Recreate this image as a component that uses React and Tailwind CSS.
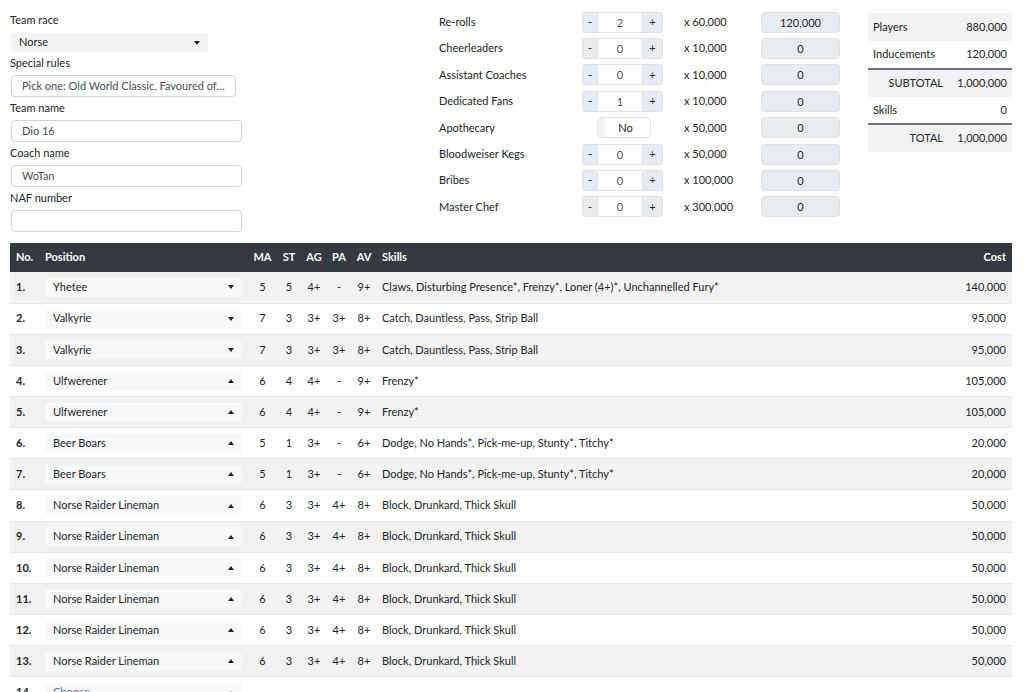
const font = { fontFamily: 'Lato, "Open Sans", "Liberation Sans", sans-serif' }

const steppers = [
  { label: 'Re-rolls', value: 2, price: 'x 60,000', total: '120,000' },
  { label: 'Cheerleaders', value: 0, price: 'x 10,000', total: '0' },
  { label: 'Assistant Coaches', value: 0, price: 'x 10,000', total: '0' },
  { label: 'Dedicated Fans', value: 1, price: 'x 10,000', total: '0' },
  { label: 'Apothecary', toggle: true, price: 'x 50,000', total: '0' },
  { label: 'Bloodweiser Kegs', value: 0, price: 'x 50,000', total: '0' },
  { label: 'Bribes', value: 0, price: 'x 100,000', total: '0' },
  { label: 'Master Chef', value: 0, price: 'x 300,000', total: '0' },
]

const yhetee = ['Yhetee', 5, 5, '4+', '-', '9+', 'Claws, Disturbing Presence*, Frenzy*, Loner (4+)*, Unchannelled Fury*', '140,000']
const valk = ['Valkyrie', 7, 3, '3+', '3+', '8+', 'Catch, Dauntless, Pass, Strip Ball', '95,000']
const ulf = ['Ulfwerener', 6, 4, '4+', '-', '9+', 'Frenzy*', '105,000']
const boar = ['Beer Boars', 5, 1, '3+', '-', '6+', 'Dodge, No Hands*, Pick-me-up, Stunty*, Titchy*', '20,000']
const line = ['Norse Raider Lineman', 6, 3, '3+', '4+', '8+', 'Block, Drunkard, Thick Skull', '50,000']

const players = [yhetee, valk, valk, ulf, ulf, boar, boar, line, line, line, line, line, line]

function Caret({ up }) {
  return (
    <svg width="6" height="4" viewBox="0 0 6 4" className="shrink-0">
      <path d={up ? 'M0 4 L3 0 L6 4 Z' : 'M0 0 L6 0 L3 4 Z'} fill="#222" />
    </svg>
  )
}

function Field({ label, value, width }) {
  return (
    <div className="mb-px">
      <div className="h-[22px] leading-[20px]">{label}</div>
      <div className={`${width} h-[22px] border border-[#ced4da] rounded-[4px] bg-white px-[10px] leading-[20px] text-[#495057] truncate`}>
        {value}
      </div>
    </div>
  )
}

export default function App() {
  return (
    <div className="w-[1024px] h-[692px] overflow-hidden bg-white text-[11px] text-[#212529]" style={font}>
      <div className="flex h-[243px]">
        {/* team details */}
        <div className="w-[429px] pl-[10px] pt-[9px]">
          <div className="h-[22px] leading-[22px]">Team race</div>
          <div className="w-[197px] h-[19px] mt-[2px] mb-px ml-px rounded-[3px] bg-[#f3f4f5] flex items-center justify-between pl-[8px] pr-[8px]">
            <span>Norse</span>
            <Caret />
          </div>
          <Field label="Special rules" value="Pick one: Old World Classic, Favoured of ..." width="w-[225px] ml-px" />
          <Field label="Team name" value="Dio 16" width="w-[231px] ml-px" />
          <Field label="Coach name" value="WoTan" width="w-[231px] ml-px" />
          <Field label="NAF number" value="" width="w-[231px] ml-px" />
        </div>

        {/* inducements */}
        <div className="w-[439px] pt-[9px]">
          {steppers.map((s) => (
            <div key={s.label} className="h-[26.4px] flex items-center">
              <div className="w-[153px] pl-[10px]">{s.label}</div>
              <div className="w-[102px] flex">
                {s.toggle ? (
                  <div className="ml-[15px] w-[54px] h-[21px] border border-[#dee2e6] rounded-[4px] bg-white flex items-center">
                    <div className="w-[7px] h-full bg-[#f1f3f5] rounded-l-[4px]" />
                    <div className="flex-1 text-center pr-[4px]">No</div>
                  </div>
                ) : (
                  <div className="flex h-[21px]">
                    <div className="w-[16px] bg-[#e9ecef] border border-[#dee2e6] rounded-l-[3px] flex items-center justify-center">-</div>
                    <div className="w-[44px] bg-white border-y border-[#dee2e6] text-center leading-[19px] text-[#495057]">{s.value}</div>
                    <div className="w-[21px] bg-[#e9ecef] border border-[#dee2e6] rounded-r-[3px] flex items-center justify-center">+</div>
                  </div>
                )}
              </div>
              <div className="w-[77px]">{s.price}</div>
              <div className="w-[79px] h-[21px] bg-[#e9ecef] border border-[#dee2e6] rounded-[4px] text-center leading-[19px]">{s.total}</div>
            </div>
          ))}
        </div>

        {/* totals */}
        <div className="pt-[13px]">
          <table className="w-[144px] border-collapse">
            <tbody>
              <tr className="bg-[#f2f2f2] h-[28px]">
                <td className="pl-[5px]">Players</td>
                <td className="pr-[5px] text-right">880,000</td>
              </tr>
              <tr className="h-[28px]">
                <td className="pl-[5px]">Inducements</td>
                <td className="pr-[5px] text-right">120,000</td>
              </tr>
              <tr className="bg-[#f2f2f2] h-[28px] border-t-2 border-[#6c757d]">
                <td className="pr-[5px] text-right w-[80px]">SUBTOTAL</td>
                <td className="pr-[5px] text-right">1,000,000</td>
              </tr>
              <tr className="h-[27px]">
                <td className="pl-[5px]">Skills</td>
                <td className="pr-[5px] text-right">0</td>
              </tr>
              <tr className="bg-[#f2f2f2] h-[28px] border-t-2 border-[#6c757d]">
                <td className="pr-[5px] text-right">TOTAL</td>
                <td className="pr-[5px] text-right">1,000,000</td>
              </tr>
            </tbody>
          </table>
        </div>
      </div>

      {/* roster */}
      <div className="px-[10px]">
        <table className="w-[1002px] table-fixed border-collapse">
          <colgroup>
            <col className="w-[29px]" />
            <col className="w-[209px]" />
            <col className="w-[29px]" />
            <col className="w-[24px]" />
            <col className="w-[26px]" />
            <col className="w-[24px]" />
            <col className="w-[26px]" />
            <col />
            <col className="w-[100px]" />
          </colgroup>
          <thead>
            <tr className="bg-[#343a40] text-white font-bold h-[29px]">
              <th className="pl-[6px] pb-px text-left">No.</th>
              <th className="pl-[6px] pb-px text-left">Position</th>
              <th className="pb-px text-center">MA</th>
              <th className="pb-px text-center">ST</th>
              <th className="pb-px text-center">AG</th>
              <th className="pb-px text-center">PA</th>
              <th className="pb-px text-center">AV</th>
              <th className="pl-[5px] pb-px text-left">Skills</th>
              <th className="pr-[6px] pb-px text-right">Cost</th>
            </tr>
          </thead>
          <tbody>
            {players.map((p, i) => (
              <tr key={i} className={`h-[31.15px] border-b border-[#e3e5e8] ${i % 2 === 0 ? 'bg-[#f2f2f2]' : 'bg-white'}`}>
                <td className="pl-[6px] font-bold">{i + 1}.</td>
                <td className="px-[6px]">
                  <div className="h-[19px] rounded-[3px] bg-[#f8f9fa] flex items-center justify-between pl-[8px] pr-[8px]">
                    <span>{p[0]}</span>
                    <Caret up={i >= 3} />
                  </div>
                </td>
                <td className="text-center">{p[1]}</td>
                <td className="text-center">{p[2]}</td>
                <td className="text-center">{p[3]}</td>
                <td className="text-center">{p[4]}</td>
                <td className="text-center">{p[5]}</td>
                <td className="pl-[5px] truncate">{p[6]}</td>
                <td className="pr-[6px] text-right">{p[7]}</td>
              </tr>
            ))}
            <tr className="h-[31px]">
              <td className="pl-[6px] font-bold">14.</td>
              <td className="px-[6px]">
                <div className="h-[19px] rounded-[3px] bg-[#f8f9fa] flex items-center justify-between pl-[8px] pr-[8px] text-[#6c757d]">
                  <span>Choose...</span>
                  <Caret up />
                </div>
              </td>
              <td colSpan={7} />
            </tr>
          </tbody>
        </table>
      </div>
    </div>
  )
}
